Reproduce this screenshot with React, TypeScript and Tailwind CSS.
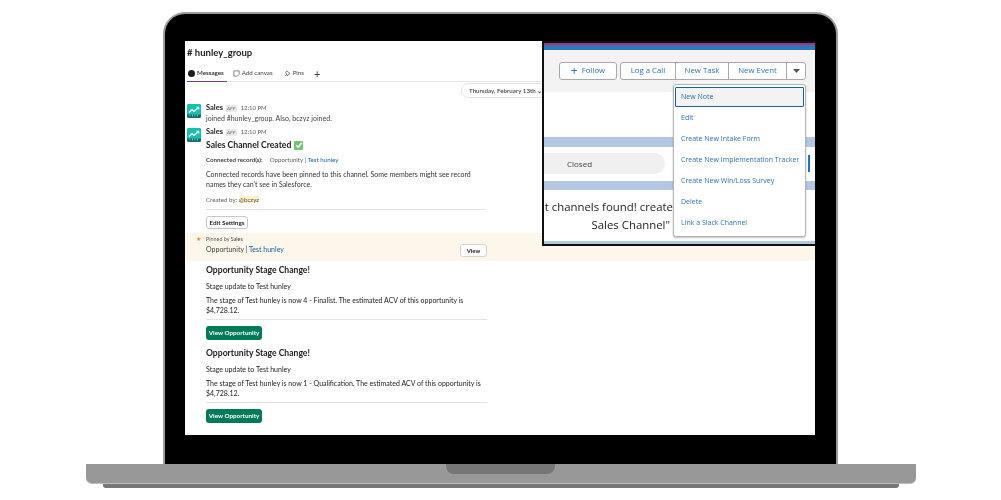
import React from "react";

function Avatar() {
  return (
    <div className="w-[14px] h-[14px] rounded-[2px] bg-[#15b8a6] shrink-0 overflow-hidden">
      <svg viewBox="0 0 14 14" width="14" height="14">
        <rect width="14" height="14" fill="#17bfae" />
        <path d="M2 8.5 L5 5.5 L7 7.5 L11.5 3.5" stroke="#fff" strokeWidth="1.2" fill="none" />
        <path d="M9.5 3.2 H11.8 V5.5" stroke="#fff" strokeWidth="1" fill="none" />
        <rect y="10.5" width="14" height="3.5" fill="#0b6f68" />
        <path d="M3 10.5v2M5.5 10.5v2M8 10.5v2M10.5 10.5v2" stroke="#bfeee8" strokeWidth="0.6" />
      </svg>
    </div>
  );
}

function MsgHead() {
  return (
    <div className="flex items-center h-[10px] leading-[10px]">
      <span className="text-[7.5px] font-bold text-[#1d1c1d]">Sales</span>
      <span className="ml-[3px] px-[1px] h-[7px] leading-[7px] text-[4.5px] text-[#777] bg-[#e8e8e8] rounded-[1px]">APP</span>
      <span className="ml-[4px] text-[6px] text-[#616061]">12:10 PM</span>
    </div>
  );
}

function GreenButton() {
  return (
    <div className="w-[56px] h-[14px] rounded-[3px] bg-[#007a5a] text-white text-[6.3px] font-bold flex items-center justify-center">
      View Opportunity
    </div>
  );
}

function StageChange({ stage }: { stage: string }) {
  return (
    <div className="pl-[21px] w-[302px]">
      <div className="h-[14px] leading-[14px] text-[8.6px] font-bold text-[#1d1c1d]">Opportunity Stage Change!</div>
      <div className="mt-[3px] h-[12px] leading-[12px] text-[7px] text-[#1d1c1d]">Stage update to Test hunley</div>
      <div className="mt-[3px] leading-[10px] text-[7px] text-[#1d1c1d]">
        The stage of Test hunley is now {stage}. The estimated ACV of this opportunity is $4,728.12.
      </div>
      <div className="mt-[4px] h-px bg-[#e3e3e3]" />
      <div className="mt-[6px]">
        <GreenButton />
      </div>
    </div>
  );
}

function SlackPane() {
  return (
    <div className="h-full flex flex-col font-['Lato',sans-serif] text-[#1d1c1d]">
      <div className="h-[24px] pl-[2px] flex items-center text-[9.5px] font-bold">
        # hunley_group
      </div>
      <div className="h-[17px] flex items-center border-b border-[#e6e6e6] relative pl-[3px] text-[6.2px] text-[#454245]">
        <span className="w-[7px] h-[7px] rounded-full bg-[#1d1c1d] mr-[2px]" />
        <span className="font-semibold text-[#1d1c1d]">Messages</span>
        <svg className="ml-[9px] mr-[2px]" width="7" height="7" viewBox="0 0 8 8" fill="none" stroke="#555" strokeWidth="0.8">
          <path d="M1 1h6v4L5 7H1z" />
        </svg>
        <span>Add canvas</span>
        <svg className="ml-[11px] mr-[2px]" width="7" height="7" viewBox="0 0 8 8" fill="none" stroke="#555" strokeWidth="0.8">
          <path d="M3 1l4 3-2 1-1 2-2-4zM1 7l2-2" />
        </svg>
        <span>Pins</span>
        <span className="ml-[10px] text-[11px] leading-none font-normal">+</span>
        <span className="absolute left-[2px] bottom-[-1px] w-[40px] h-[1px] bg-[#7a3e8f]" />
      </div>
      <div className="h-[0px] relative">
        <div className="absolute left-[276px] top-[1px] w-[90px] h-[15px] rounded-full border border-[#e3e3e3] bg-white flex items-center pl-[7px] text-[6.2px] font-semibold text-[#454245] whitespace-nowrap">
          Thursday, February 13th ⌄
        </div>
      </div>

      <div className="mt-[21px] pl-[2px] flex gap-[5px]">
        <div className="pt-[1px]"><Avatar /></div>
        <div>
          <MsgHead />
          <div className="h-[10px] leading-[10px] text-[7px] text-[#454245]">joined #hunley_group. Also, bczyz joined.</div>
        </div>
      </div>

      <div className="mt-[4px] pl-[2px] flex gap-[5px]">
        <div className="pt-[1px]"><Avatar /></div>
        <div className="w-[280px]">
          <MsgHead />
          <div className="mt-[1px] h-[14px] leading-[14px] text-[8.6px] font-bold flex items-center">
            Sales Channel Created
            <span className="ml-[3px] w-[9px] h-[9px] bg-[#74c476] rounded-[1px] flex items-center justify-center">
              <svg width="8" height="8" viewBox="0 0 8 8" fill="none" stroke="#fff" strokeWidth="1.4"><path d="M1.2 4.2 3.2 6.2 6.8 1.8" /></svg>
            </span>
          </div>
          <div className="mt-[3px] h-[10px] leading-[10px] text-[6.2px]">
            <span className="font-bold text-[#454245]">Connected record(s):</span>
            <span className="ml-[7px] text-[#616061]">Opportunity | </span>
            <span className="text-[#1264a3]">Test hunley</span>
          </div>
          <div className="mt-[4px] leading-[10px] text-[7px] text-[#333]">
            Connected records have been pinned to this channel. Some members might see record names they can't see in Salesforce.
          </div>
          <div className="mt-[6px] h-[10px] leading-[10px] text-[6.2px] text-[#616061]">
            Created by: <span className="bg-[#fdf3c9] text-[#555] rounded-[1px]">@bczyz</span>
          </div>
          <div className="mt-[4px] h-px bg-[#e3e3e3]" />
          <div className="mt-[6px] w-[42px] h-[13px] rounded-[3px] border border-[#c8c8c8] text-[6.3px] font-bold flex items-center justify-center">
            Edit Settings
          </div>
        </div>
      </div>

      <div className="mt-[4px] h-[28px] bg-[#fdf6ea] pl-[21px] flex">
        <div className="w-[281px] relative pt-[2px]">
          <span className="absolute left-[-10px] top-[2px] text-[6px] leading-[8px] text-[#e8912d]">★</span>
          <div className="h-[8px] leading-[8px] text-[5.4px] text-[#616061]">Pinned by <span className="text-[#454245]">Sales</span></div>
          <div className="mt-[1px] h-[10px] leading-[10px] text-[7px] text-[#454245]">
            Opportunity | <span className="text-[#1264a3]">Test hunley</span>
          </div>
          <div className="absolute right-0 top-[11px] w-[27px] h-[13px] rounded-[3px] border border-[#d5d5d5] bg-white text-[6px] font-bold flex items-center justify-center">
            View
          </div>
        </div>
      </div>

      <div className="mt-[2px]">
        <StageChange stage="4 - Finalist" />
      </div>
      <div className="mt-[6px]">
        <StageChange stage="1 - Qualification" />
      </div>
    </div>
  );
}

const menuItems = ["Edit", "Create New Intake Form", "Create New Implementation Tracker", "Create New Win/Loss Survey", "Delete", "Link a Slack Channel"];

function SalesforcePane() {
  return (
    <div className="absolute right-0 top-0 w-[273px] h-[205px] border-2 border-[#111] border-r-0 bg-white font-['Open_Sans',sans-serif] flex flex-col">
      <div className="h-[7px] shrink-0 bg-[#2f78b8] border-t-2 border-[#a8327f]" />
      <div className="h-[42px] shrink-0 bg-[#f3f3f3] pl-[15px] pt-[12px] flex text-[7.8px] text-[#2b72b5]">
        <div className="w-[58px] h-[18px] bg-white border border-[#a8a8a8] rounded-[3px] flex items-center justify-center gap-[4px]">
          <span className="text-[12px] leading-none">+</span>Follow
        </div>
        <div className="ml-[3px] h-[18px] flex bg-white border border-[#a8a8a8] rounded-[3px]">
          <div className="w-[55px] flex items-center justify-center border-r border-[#a8a8a8]">Log a Call</div>
          <div className="w-[53px] flex items-center justify-center border-r border-[#a8a8a8]">New Task</div>
          <div className="w-[58px] flex items-center justify-center border-r border-[#a8a8a8]">New Event</div>
          <div className="w-[18px] flex items-center justify-center">
            <svg width="7" height="4" viewBox="0 0 7 4"><path d="M0 0h7L3.5 4z" fill="#555" /></svg>
          </div>
        </div>
      </div>
      <div className="h-[45px] shrink-0 bg-white" />
      <div className="h-[10px] shrink-0 bg-[#b3c7e2]" />
      <div className="h-[34px] shrink-0 bg-white pt-[6px] flex">
        <div className="w-[121px] h-[21px] rounded-r-full bg-[#f0f0f0] pl-[23px] text-[8px] leading-[21px] text-[#444]">Closed</div>
      </div>
      <div className="h-[9px] shrink-0 bg-[#b3c7e2]" />
      <div className="flex-1 bg-white w-full relative">
        <div className="absolute left-0 w-[129px] top-[8px] overflow-hidden text-right text-[11.4px] leading-[18px] text-[#222] whitespace-nowrap">t channels found! create</div>
        <div className="absolute left-0 w-[126px] top-[26px] text-right text-[11.4px] leading-[18px] text-[#222] whitespace-nowrap">Sales Channel"</div>
      </div>
      <div className="h-[3px] shrink-0 bg-[#b3c7e2]" />
      <div className="absolute left-[264px] top-[112px] w-[2px] h-[17px] bg-[#1b72c9]" />
      <div className="absolute left-[129px] top-[41px] w-[133px] h-[153px] bg-white border border-[#b5b5b5] rounded-[3px] shadow-[0_1px_2px_rgba(0,0,0,0.25)] text-[7px] text-[#2b72b5] pt-[2px] px-[1px] z-10">
        <div className="h-[20px] mb-px bg-[#f3f3f3] border border-[#1b5fa8] rounded-[1px] pl-[5px] flex items-center">New Note</div>
        {menuItems.map((t) => (
          <div key={t} className="h-[21px] pl-[6px] flex items-center whitespace-nowrap">{t}</div>
        ))}
      </div>
    </div>
  );
}

export default function App() {
  return (
    <div className="w-[1001px] h-[500px] bg-white overflow-hidden flex flex-col items-center pt-[12px]">
      <div className="w-[675px] h-[452px] shrink-0 bg-black border-2 border-b-0 border-[#9c9c9c] rounded-t-[22px] pt-[27px] pl-[20px]">
        <div className="relative w-[630px] h-[394px] bg-white overflow-hidden blur-[0.3px]">
          <SlackPane />
          <SalesforcePane />
        </div>
      </div>
      <div className="w-[830px] h-[20px] shrink-0 bg-[#989898] rounded-b-[6px] border-b border-[#bdbdbd] flex justify-center">
        <div className="w-[109px] h-[10px] bg-[#767676] rounded-b-[8px]" />
      </div>
      <div className="w-[796px] h-[4px] shrink-0 bg-[#767676] rounded-b-[3px]" />
    </div>
  );
}
